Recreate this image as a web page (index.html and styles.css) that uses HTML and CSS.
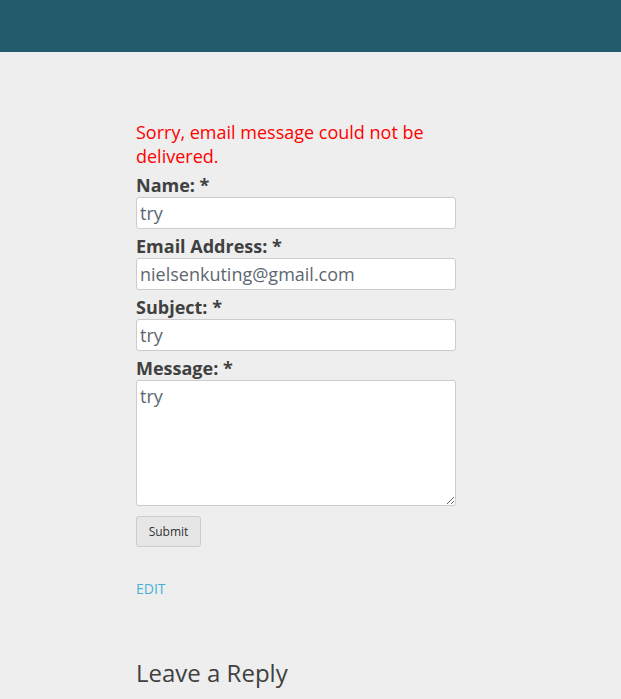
FILE: index.html
```html
<!DOCTYPE html>
<html>
<head>
<meta charset="utf-8">
<link rel="stylesheet" href="styles.css">
</head>
<body>
<header class="topbar"></header>
<main class="content">
  <p class="error">Sorry, email message could not be delivered.</p>
  <form class="contact">
    <label class="lbl">Name: *</label>
    <input class="field" type="text" value="try">
    <label class="lbl">Email Address: *</label>
    <input class="field" type="text" value="nielsenkuting@gmail.com">
    <label class="lbl">Subject: *</label>
    <input class="field" type="text" value="try">
    <label class="lbl">Message: *</label>
    <textarea class="area">try</textarea>
    <button class="submit" type="button">Submit</button>
  </form>
  <a class="edit" href="#">EDIT</a>
  <h3 class="reply">Leave a Reply</h3>
</main>
</body>
</html>
```
FILE: styles.css
```css
html, body {
  margin: 0;
  padding: 0;
  background: #eeeeee;
  font-family: "Open Sans", "Liberation Sans", sans-serif;
}
.topbar {
  height: 52px;
  background: #235b6d;
}
.content {
  padding: 68px 0 0 136px;
  width: 320px;
}
.error {
  margin: 0 0 5px 0;
  color: #ff0000;
  font-size: 18px;
  line-height: 24px;
}
.contact {
  display: flex;
  flex-direction: column;
  align-items: flex-start;
}
.lbl {
  display: block;
  font-weight: 700;
  font-size: 18px;
  line-height: 24px;
  color: #404040;
}
.field, .area {
  box-sizing: border-box;
  width: 320px;
  border: 1px solid #cccccc;
  border-radius: 3px;
  background: #fff;
  font-family: "Open Sans", "Liberation Sans", sans-serif;
  font-size: 18px;
  color: #5d6670;
  padding: 0 3px;
  margin: 0 0 5px 0;
  outline: none;
}
.field {
  height: 32px;
}
.area {
  height: 126px;
  padding: 3px 3px;
  line-height: 24px;
  margin-bottom: 10px;
  resize: both;
}
.submit {
  width: 65px;
  height: 31px;
  border: 1px solid #cccccc;
  border-radius: 3px;
  background: #e6e6e6;
  font-family: "Open Sans", "Liberation Sans", sans-serif;
  font-size: 12px;
  color: #333;
  padding: 0;
}
.edit {
  display: block;
  margin-top: 33px;
  font-size: 14px;
  line-height: 18px;
  color: #45b0d8;
  text-decoration: none;
}
.reply {
  margin: 59px 0 0 0;
  font-weight: 400;
  font-size: 24px;
  line-height: 32px;
  color: #404040;
}
```
